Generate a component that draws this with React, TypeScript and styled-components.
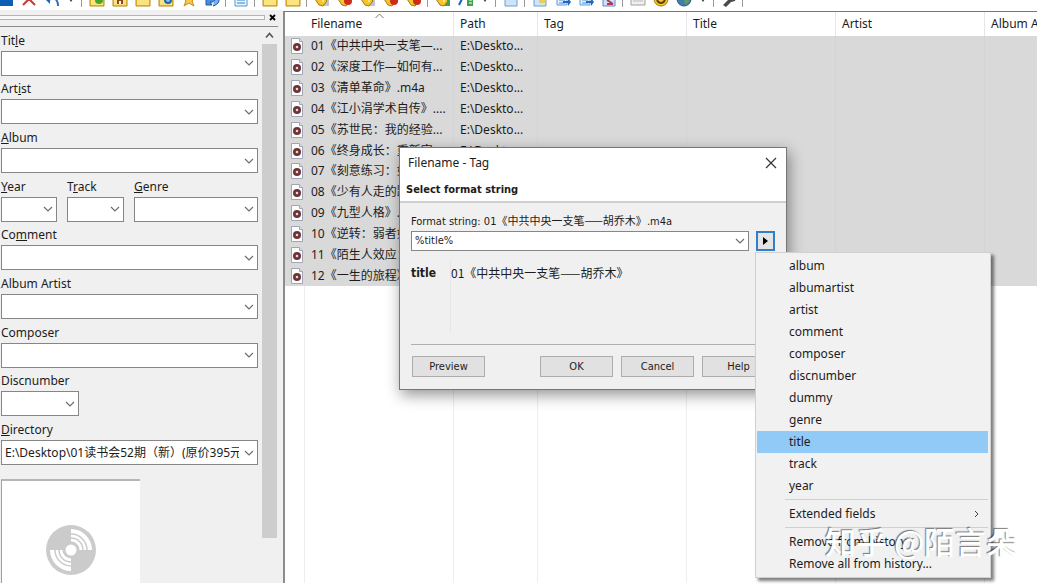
import React from "react";
import styled, { createGlobalStyle } from "styled-components";

const ui = `"Noto Sans", "Noto Sans CJK SC", sans-serif`;
const dialogUi = `"DejaVu Sans Condensed", "Noto Sans CJK SC", sans-serif`;

const GlobalStyle = createGlobalStyle`
  * { box-sizing: border-box; }
  body { margin: 0; background: #fff; font: 12px/16px ${ui}; color: #1c1c1c; }
  button, select { font: inherit; color: inherit; }
`;

const Page = styled.div`
  position: relative;
  display: flex;
  flex-direction: column;
  height: 100vh;
  padding: 0 8px 3px 0;
  overflow: hidden;
`;

/* ---------- toolbar ---------- */

const Toolbar = styled.div`
  display: flex;
  flex: none;
  align-items: flex-end;
  height: 11px;
  padding-bottom: 4px;
  margin-left: -6px;
  overflow: hidden;
`;

const ToolButton = styled.button<{ $narrow?: boolean }>`
  flex: none;
  display: flex;
  justify-content: center;
  width: ${(p) => (p.$narrow ? 16 : 23)}px;
  padding: 0;
  border: 0;
  background: none;
`;

const ToolSeparator = styled.span`
  flex: none;
  align-self: stretch;
  width: 6px;
  margin-bottom: -4px;
  background: linear-gradient(#9a9a9a, #9a9a9a) 2px 0 / 1px 7px no-repeat;
`;

type IconName =
  | "save" | "remove" | "undo" | "caret" | "folder" | "folderAdd" | "folderHome" | "folderRefresh"
  | "star" | "refresh" | "list" | "tagNote" | "tagRed" | "tagGreen" | "textGreen" | "page"
  | "pageYellow" | "pageArrow" | "pageRed" | "card" | "smile" | "globe" | "wrench";

const Folder = () => (
  <>
    <path d="M1 4h5l1 2h8v9H1z" fill="#f3cd45" stroke="#b98a14" />
    <path d="M2 8h12v6H2z" fill="#fbe47d" />
  </>
);
const Tag = ({ color }: { color: string }) => (
  <>
    <path d="M9 8h6v7H9z" fill={color} />
    <path d="M1 8l8-2 4 4-4 5-4-1z" fill="#f4c52c" stroke="#a9790c" />
    <circle cx="9" cy="10" r="1" fill="#fff4b5" />
  </>
);
const RedTag = () => (
  <>
    <path d="M1 8l8-2 4 4-4 5-4-1z" fill="#f4c52c" stroke="#a9790c" />
    <circle cx="11" cy="10" r="4" fill="#cf2c18" />
  </>
);
const Sheet = ({ mark }: { mark: string }) => (
  <>
    <path d="M2 1h10v13H2z" fill="#e3f1fd" stroke="#5f9bd0" />
    <path d="M4 9h6M4 12h6" stroke="#4b8fcf" />
    <path d="M8 10h5V7l3 4-3 4v-3H8z" fill={mark} />
  </>
);

const drawings: Record<IconName, React.ReactNode> = {
  save: <path d="M1 1h14v14H1z" fill="#0b5fb4" />,
  remove: <path d="M2 2l12 12M14 2L2 14" stroke="#c8392b" strokeWidth="2" />,
  undo: (
    <>
      <path d="M1 8l5-4v9z" fill="#1f63b5" />
      <path d="M5 9c5-3 9-1 9 6" fill="none" stroke="#2d6fbe" strokeWidth="2" />
    </>
  ),
  caret: <path d="M6 8h4l-2 3z" fill="#444" />,
  folder: <Folder />,
  folderAdd: <><Folder /><circle cx="10" cy="9" r="4" fill="#43a828" /></>,
  folderHome: <><Folder /><path d="M5 8h6v5H5z" fill="#8d4a22" /><path d="M7 10h2v3H7z" fill="#fff" /></>,
  folderRefresh: <><Folder /><circle cx="10" cy="9" r="3" fill="#8fc1ee" stroke="#1e62b4" strokeWidth="2" /></>,
  star: <path d="M8 1l2 5h5l-4 4 2 5-5-3-5 3 2-5-4-4h5z" fill="#f8c848" stroke="#c88d1c" />,
  refresh: (
    <>
      <path d="M2 6v8h6l-2-3c4 1 6-2 6-6" fill="#4b8ce0" stroke="#1d56a8" />
      <path d="M10 10l5-6v6c-1 3-3 4-6 5" fill="#7bb0ee" stroke="#1d56a8" />
    </>
  ),
  list: <><path d="M2 1h12v14H2z" fill="#e8f5fe" stroke="#4d9bd3" /><path d="M4 9h8M4 12h8" stroke="#2d86cc" strokeWidth="1" /></>,
  tagNote: <Tag color="#b9c6da" />,
  tagRed: <RedTag />,
  tagGreen: <Tag color="#3ea14c" />,
  textGreen: <><path d="M1 14l3-6h4" fill="none" stroke="#1f63b5" strokeWidth="2" /><path d="M9 6h6v9H9z" fill="#3ea14c" /><path d="M11 9h3M11 12h3" stroke="#fff" /></>,
  page: <path d="M2 1h12v14H2z" fill="#cde4fa" stroke="#6f9fd3" />,
  pageYellow: <><path d="M2 1h12v14H2z" fill="#cde4fa" stroke="#6f9fd3" /><path d="M7 8h6v4H7z" fill="#edcc57" /></>,
  pageArrow: <Sheet mark="#2467bd" />,
  pageRed: <><path d="M2 1h12v14H2z" fill="#cfe0fa" stroke="#5f86d0" /><path d="M6 9l6 4M6 13h6" stroke="#b13a55" strokeWidth="2" /></>,
  card: <><path d="M1 2h14v12H1z" fill="#f0f0f0" stroke="#a0a0a0" /><path d="M3 10h10" stroke="#bbb" /></>,
  smile: <><circle cx="8" cy="8" r="7" fill="#f6c62e" stroke="#a4770c" /><path d="M4 9c2 4 6 4 8 0" fill="none" stroke="#5d430a" strokeWidth="2" /></>,
  globe: <><circle cx="8" cy="8" r="7" fill="#3f7fae" stroke="#37586e" /><path d="M8 8l5-3v6l-4 3z" fill="#5f9a5f" /></>,
  wrench: <path d="M2 14l6-6 1-5 4-1-2 3 2 2 2-1-1 4-4 1-5 5z" fill="#4a4a4a" />,
};

const Icon = ({ name }: { name: IconName }) => (
  <svg width="16" height="16" viewBox="0 0 16 16" aria-hidden="true">{drawings[name]}</svg>
);

const toolGroups: IconName[][] = [
  ["save", "remove", "undo", "caret"],
  ["folderAdd", "folderHome", "folder", "folderRefresh", "star", "refresh"],
  ["list"],
  ["folder", "folder"],
  ["tagNote", "tagRed", "tagNote", "tagRed", "tagRed"],
  ["tagGreen", "textGreen", "caret"],
  ["page"],
  ["pageYellow", "pageArrow", "pageArrow", "pageRed"],
  ["card", "smile", "globe", "caret"],
  ["wrench"],
];

/* ---------- tag panel ---------- */

const Workspace = styled.div`
  display: flex;
  flex: 1;
  min-height: 0;
`;

const Sidebar = styled.aside`
  display: flex;
  flex: none;
  flex-direction: column;
  width: 283px;
  padding-right: 5px;
  background: #f0f0f0;
  box-shadow: 0 -1px #f0f0f0;
`;

const Gripper = styled.div`
  display: flex;
  flex: none;
  align-items: center;
  gap: 2px;
  height: 16px;
  padding-bottom: 2px;
  border-bottom: 1px solid #8b8b8b;
`;

const GripBar = styled.span`
  flex: 1;
  height: 5px;
  border: 1px solid #b4b4b4;
  border-left: 0;
  background: #f8f8f8;
`;

const PanelClose = styled.button`
  display: flex;
  align-items: center;
  justify-content: center;
  width: 11px;
  height: 12px;
  padding: 0;
  border: 0;
  background: none;
`;

const PanelBody = styled.div`
  display: flex;
  flex: 1;
  min-height: 0;
  overflow: hidden;
`;

const PanelContent = styled.div`
  flex: 1;
  padding: 0 4px 0 1px;
`;

const TagForm = styled.form`
  display: grid;
  grid-auto-rows: 1fr;
  height: 438px;
`;

const FieldRow = styled.div`
  display: grid;
  grid-template-columns: 56px 57px 1fr;
  gap: 10px;
`;

const Field = styled.div<{ $width?: number }>`
  display: flex;
  flex-direction: column;
  justify-content: flex-end;
  gap: 2px;
  width: ${(p) => (p.$width ? `${p.$width}px` : "auto")};
`;

const ComboBox = styled.div<{ $height: number }>`
  display: grid;
  grid-template-columns: minmax(0, 1fr) 17px;
  align-items: center;
  height: ${(p) => p.$height}px;
  border: 1px solid #868686;
  background: #fff;

  select {
    grid-area: 1 / 1 / 2 / 3;
    width: 100%;
    height: 100%;
    padding: 0 18px 0 3px;
    border: 0;
    appearance: none;
    background: none;
    text-overflow: clip;
  }
  svg {
    grid-area: 1 / 2;
    pointer-events: none;
  }
`;

const Chevron = () => (
  <svg width="18" height="8" viewBox="0 0 18 8" aria-hidden="true">
    <path d="M5 2l4 4 4-4" fill="none" stroke="#6e6e6e" strokeWidth="1.2" />
  </svg>
);

const Combo = ({ id, value = "", height = 25, label }: { id: string; value?: string; height?: number; label?: string }) => (
  <ComboBox $height={height}>
    <select id={id} aria-label={label} defaultValue={value}>
      <option value={value}>{value}</option>
    </select>
    <Chevron />
  </ComboBox>
);

/* The letter at position `hot` is the underlined keyboard mnemonic. */
const TagField = ({ label, hot, value, width }: { label: string; hot?: number; value?: string; width?: number }) => {
  const id = `tag-${label.toLowerCase().replace(" ", "-")}`;
  return (
    <Field $width={width}>
      <label htmlFor={id}>
        {hot === undefined ? label : <>{label.slice(0, hot)}<u>{label[hot]}</u>{label.slice(hot + 1)}</>}
      </label>
      <Combo id={id} value={value} />
    </Field>
  );
};

const Cover = styled.div`
  display: flex;
  justify-content: center;
  align-items: center;
  width: 139px;
  height: 139px;
  margin-top: 14px;
  border-top: 2px solid #b5b5b5;
  border-left: 1px solid #a0a0a0;
  background: #fff;
`;

const ScrollBar = styled.div`
  display: flex;
  flex: none;
  flex-direction: column;
  width: 15px;
  margin-right: 1px;
  padding-bottom: 45px;
  background: #f0f0f0;
`;

const ScrollUp = styled.button`
  height: 17px;
  padding: 0;
  border: 0;
  background: none;
  line-height: 0;
`;

const ScrollThumb = styled.div`
  flex: 1;
  background: #cdcdcd;
`;

/* ---------- file list ---------- */

const FileList = styled.main`
  display: flex;
  flex: 1;
  flex-direction: column;
  min-width: 0;
  overflow: hidden;
  border-top: 1px solid #777;
  border-left: 2px solid #8c8c8c;
`;

const FileTable = styled.table`
  flex: none;
  width: 100%;
  height: 274px;
  table-layout: fixed;
  border-collapse: separate;
  border-spacing: 0;

  th, td {
    padding: 0 0 0 6px;
    overflow: hidden;
    border-right: 1px solid #d2d4d8;
    text-align: left;
    font-weight: 400;
    white-space: nowrap;
  }
  th { height: 24px; border-right-color: #e3e6ea; }
  th:first-child { padding-left: 26px; }
  th:last-child, td:last-child { border-right: 0; }
  tbody { background: #d9d9d9; }
  td:first-child { padding-left: 5px; }
`;

const columnWidths = [169, 84, 149, 149, 149];

const SortHeader = styled.span`
  display: flex;
  justify-content: space-between;
  svg { margin: -3px 69px 0 0; }
`;

const FileName = styled.span`
  display: flex;
  align-items: center;
  gap: 7px;
`;

const ColumnRules = styled.div`
  display: grid;
  flex: 1;
  grid-template-columns: 20px 149px 84px 149px 149px 149px 1fr;
  span { border-right: 1px solid #eceef1; }
  span:last-child { border: 0; }
`;

const AudioFile = () => (
  <svg width="14" height="16" viewBox="0 0 14 16" aria-hidden="true">
    <path d="M1.500.5h8l3 3v12h-11z" fill="#fdfdfd" stroke="#a2a5b5" />
    <path d="M9.500.5v3h3" fill="#dfe2ea" stroke="#a2a5b5" />
    <circle cx="7" cy="9" r="4" fill="#6b3438" />
    <circle cx="7" cy="9" r="1.300" fill="#f0d5ca" />
  </svg>
);

const files = [
  "01《中共中央一支笔—...",
  "02《深度工作—如何有...",
  "03《清单革命》.m4a",
  "04《江小涓学术自传》....",
  "05《苏世民：我的经验...",
  "06《终身成长：重新定...",
  "07《刻意练习：如何从...",
  "08《少有人走的路》...",
  "09《九型人格》.m4a",
  "10《逆转：弱者如何...",
  "11《陌生人效应：...",
  "12《一生的旅程》...",
];

/* ---------- dialog ---------- */

const Dialog = styled.section`
  position: absolute;
  left: 399px;
  top: 147px;
  width: 388px;
  height: 243px;
  display: flex;
  flex-direction: column;
  border: 1px solid #777;
  background: #f0f0f0;
  box-shadow: 2px 5px 14px rgba(0, 0, 0, 0.42);
  font: 11px/16px ${dialogUi};
`;

const DialogHead = styled.header`
  flex: none;
  height: 55px;
  padding: 6px 9px 0 6px;
  border-bottom: 2px solid #cfcfcf;
  background: #fff;
`;

const TitleBar = styled.div`
  display: flex;
  align-items: center;
  justify-content: space-between;
  padding-left: 2px;
  font: 12px/18px ${ui};
`;

const CloseButton = styled.button`
  display: flex;
  padding: 0;
  border: 0;
  background: none;
`;

const DialogHeading = styled.h2`
  margin: 10px 0 0;
  font-size: 11px;
  line-height: 16px;
`;

const DialogBody = styled.div`
  display: flex;
  flex: 1;
  flex-direction: column;
  padding: 9px 11px 12px 11px;
`;

/* Chinese face for the whole run, so that its double dash joins into one line. */
const Chinese = styled.span`
  font-family: "Noto Sans CJK SC", sans-serif;
`;

const FormatRow = styled.div`
  display: grid;
  grid-template-columns: 1fr 19px;
  gap: 7px;
  margin-top: 1px;
`;

const ArrowButton = styled.button`
  display: flex;
  align-items: center;
  justify-content: center;
  height: 20px;
  padding: 0;
  border: 2px solid #2f80c8;
  background: #e4e4e4;
`;

const Result = styled.dl`
  display: grid;
  grid-template-columns: 40px 1fr;
  flex: 1;
  margin: 9px 0 10px;
  dt { padding-top: 4px; border-right: 1px solid #e6e6e6; font: bold 12px/18px "DejaVu Sans Condensed", sans-serif; }
  dd { margin: 0; padding-top: 4px; font: 12px/18px "Noto Sans CJK SC", sans-serif; }
`;

const DialogButtons = styled.div`
  display: grid;
  grid-template-columns: 73px 1fr 73px 73px 73px;
  gap: 8px;
  padding: 11px 0 0 1px;
  border-top: 1px solid #b0b0b0;
  button:nth-child(2) { grid-column: 3; }
`;

const PushButton = styled.button`
  height: 21px;
  padding: 0;
  border: 1px solid #adadad;
  background: #e1e1e1;
`;

/* ---------- popup menu ---------- */

const Menu = styled.div`
  position: absolute;
  left: 755px;
  top: 252px;
  width: 236px;
  padding: 2px 2px 2px 1px;
  border: 1px solid #d0d0d0;
  background: #f1f1f1;
  box-shadow: 3px 3px 3px rgba(0, 0, 0, 0.5);
`;

const MenuItem = styled.button<{ $active?: boolean }>`
  display: flex;
  align-items: center;
  justify-content: space-between;
  width: 100%;
  height: 22px;
  padding: 0 8px 0 32px;
  border: 0;
  background: ${(p) => (p.$active ? "#91c9f7" : "none")};
  text-align: left;
`;

const MenuRule = styled.hr`
  height: 1px;
  margin: 2px 0 3px 28px;
  border: 0;
  background: #cfcfcf;
`;

const Watermark = styled.div`
  position: absolute;
  left: 825px;
  top: 521px;
  color: #fff;
  font: 500 31px/40px "Noto Sans CJK SC", sans-serif;
  white-space: nowrap;
  text-shadow: -1px -1px 1px rgba(0, 0, 0, 0.5);
  pointer-events: none;
`;

const tagNames = ["album", "albumartist", "artist", "comment", "composer", "discnumber", "dummy", "genre", "title", "track", "year"];

export default function App() {
  return (
    <Page>
      <GlobalStyle />
      <Toolbar role="toolbar" aria-label="Main">
        {toolGroups.map((group, g) => (
          <React.Fragment key={g}>
            {group.map((name, i) => (
              <ToolButton key={i} type="button" aria-label={name} $narrow={name === "caret"}>
                <Icon name={name} />
              </ToolButton>
            ))}
            <ToolSeparator />
          </React.Fragment>
        ))}
      </Toolbar>

      <Workspace>
        <Sidebar>
          <Gripper>
            <GripBar />
            <PanelClose type="button" aria-label="Close panel">
              <svg width="7" height="7" viewBox="0 0 7 7"><path d="M1 1l5 5M6 1L1 6" stroke="#000" strokeWidth="1.800" /></svg>
            </PanelClose>
          </Gripper>
          <PanelBody>
            <PanelContent>
              <TagForm>
                <TagField label="Title" hot={3} />
                <TagField label="Artist" hot={3} />
                <TagField label="Album" hot={0} />
                <FieldRow>
                  <TagField label="Year" hot={0} />
                  <TagField label="Track" hot={1} />
                  <TagField label="Genre" hot={0} />
                </FieldRow>
                <TagField label="Comment" hot={2} />
                <TagField label="Album Artist" />
                <TagField label="Composer" />
                <TagField label="Discnumber" width={78} />
                <TagField label="Directory" hot={0} value="E:\Desktop\01读书会52期（新）(原价395元)" />
              </TagForm>
              <Cover>
                <svg width="52" height="52" viewBox="0 0 52 52" aria-label="No cover">
                  <circle cx="26" cy="26" r="25" fill="#cbcbcb" />
                  <path d="M26 5a21 21 0 0 1 21 21H26zM26 47A21 21 0 0 1 5 26h21z" fill="#fff" />
                  <g fill="none" stroke="#cbcbcb" strokeWidth="1.500">
                    <path d="M26 10a16 16 0 0 1 16 16M26 14a12 12 0 0 1 12 12M26 42A16 16 0 0 1 10 26M26 38a12 12 0 0 1-12-12" />
                  </g>
                  <circle cx="26" cy="26" r="7" fill="#fff" stroke="#cbcbcb" strokeWidth="3" />
                </svg>
              </Cover>
            </PanelContent>
            <ScrollBar>
              <ScrollUp type="button" aria-label="Scroll up">
                <svg width="9" height="7" viewBox="0 0 9 7"><path d="M1 5.500l3.500-4 3.500 4" fill="none" stroke="#505050" strokeWidth="1.500" /></svg>
              </ScrollUp>
              <ScrollThumb />
            </ScrollBar>
          </PanelBody>
        </Sidebar>

        <FileList>
          <FileTable>
            <colgroup>
              {columnWidths.map((width, i) => <col key={i} width={width} />)}
              <col />
            </colgroup>
            <thead>
              <tr>
                <th>
                  <SortHeader>
                    Filename
                    <svg width="9" height="6" viewBox="0 0 9 6"><path d="M.5 5l4-4 4 4" fill="none" stroke="#777" /></svg>
                  </SortHeader>
                </th>
                <th>Path</th>
                <th>Tag</th>
                <th>Title</th>
                <th>Artist</th>
                <th>Album Artist</th>
              </tr>
            </thead>
            <tbody>
              {files.map((file) => (
                <tr key={file}>
                  <td><FileName><AudioFile />{file}</FileName></td>
                  <td>E:\Deskto...</td>
                  <td /><td /><td /><td />
                </tr>
              ))}
            </tbody>
          </FileTable>
          <ColumnRules>
            <span /><span /><span /><span /><span /><span /><span />
          </ColumnRules>
        </FileList>
      </Workspace>

      <Dialog role="dialog" aria-label="Filename - Tag">
        <DialogHead>
          <TitleBar>
            Filename - Tag
            <CloseButton type="button" aria-label="Close">
              <svg width="12" height="12" viewBox="0 0 12 12"><path d="M1 1l10 10M11 1L1 11" stroke="#333" strokeWidth="1.200" /></svg>
            </CloseButton>
          </TitleBar>
          <DialogHeading>Select format string</DialogHeading>
        </DialogHead>
        <DialogBody>
          <label htmlFor="format">Format string: 01<Chinese>《中共中央一支笔——胡乔木》</Chinese>.m4a</label>
          <FormatRow>
            <Combo id="format" value="%title%" height={20} />
            <ArrowButton type="button" aria-label="Insert field">
              <svg width="5" height="8" viewBox="0 0 5 8"><path d="M0 0l5 4-5 4z" fill="#000" /></svg>
            </ArrowButton>
          </FormatRow>
          <Result>
            <dt>title</dt>
            <dd>01《中共中央一支笔——胡乔木》</dd>
          </Result>
          <DialogButtons>
            <PushButton type="button">Preview</PushButton>
            <PushButton type="button">OK</PushButton>
            <PushButton type="button">Cancel</PushButton>
            <PushButton type="button">Help</PushButton>
          </DialogButtons>
        </DialogBody>
      </Dialog>

      <Menu role="menu">
        {tagNames.map((name) => (
          <MenuItem key={name} type="button" role="menuitem" $active={name === "title"}>{name}</MenuItem>
        ))}
        <MenuRule />
        <MenuItem type="button" role="menuitem">
          Extended fields
          <svg width="6" height="8" viewBox="0 0 6 8"><path d="M1 1l3 3-3 3" fill="none" stroke="#444" /></svg>
        </MenuItem>
        <MenuRule />
        <MenuItem type="button" role="menuitem">Remove from history</MenuItem>
        <MenuItem type="button" role="menuitem">Remove all from history...</MenuItem>
      </Menu>

      <Watermark>知乎 @陌言朵</Watermark>
    </Page>
  );
}
